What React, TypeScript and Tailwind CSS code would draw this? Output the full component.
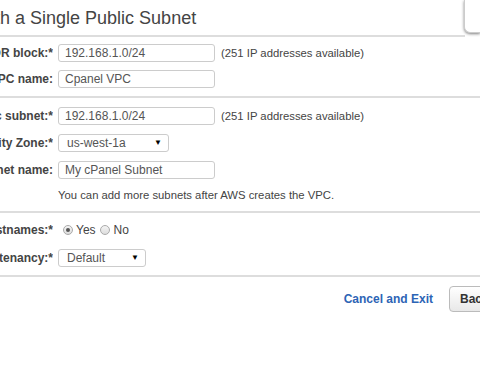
import React from "react";

const font = { fontFamily: '"Liberation Sans", Arial, sans-serif' };

function Label({ children }: { children: React.ReactNode }) {
  return (
    <div className="w-[173px] shrink-0 flex justify-end overflow-hidden whitespace-nowrap text-[12px] font-bold text-[#444]">
      {children}
    </div>
  );
}

function Row({ label, children }: { label: string; children: React.ReactNode }) {
  return (
    <div className="flex items-center h-[18px] gap-[5px]">
      <Label>{label}</Label>
      {children}
    </div>
  );
}

function TextInput({ value, w = "w-[157px]" }: { value: string; w?: string }) {
  return (
    <div className={`${w} h-[18px] border border-[#ccc] rounded-[3px] bg-white flex items-center pl-[6px] text-[12px] text-[#555] whitespace-nowrap`}>
      {value}
    </div>
  );
}

function Select({ value, w }: { value: string; w: string }) {
  return (
    <div className={`${w} h-[18px] border border-[#ccc] rounded-[3px] bg-white flex items-center justify-between pl-[8px] pr-[6px] text-[12px] text-[#555] whitespace-nowrap`}>
      <span>{value}</span>
      <span className="text-[8px] text-black">▼</span>
    </div>
  );
}

function Radio({ checked }: { checked?: boolean }) {
  return (
    <span className="w-[10px] h-[10px] rounded-full border border-[#aaa] bg-gradient-to-b from-[#f4f4f4] to-[#ddd] flex items-center justify-center">
      {checked && <span className="w-[4px] h-[4px] rounded-full bg-[#555]" />}
    </span>
  );
}

export default function App() {
  return (
    <div className="w-[480px] h-[370px] bg-white overflow-hidden relative" style={font}>
      <div className="absolute right-0 top-0 w-[16px] h-[33px] bg-white rounded-bl-[6px] border-l border-b border-[#ccc] shadow-[0_1px_3px_rgba(0,0,0,0.5)]" />
      <div className="ml-[-120px] w-[700px]">
        <div className="h-[35px] pl-[56px] pt-[7px] text-[18px] text-[#444] whitespace-nowrap leading-[22px]">
          VPC with a Single Public Subnet
        </div>
        <div className="w-[585px] h-[2px] bg-[#ddd]" />
        <div className="flex flex-col gap-[8px] pt-[7px] pb-[8px]">
          <Row label="IPv4 CIDR block:*">
            <TextInput value="192.168.1.0/24" />
            <span className="ml-[1px] text-[11.3px] text-[#444]">(251 IP addresses available)</span>
          </Row>
          <Row label="VPC name:">
            <TextInput value="Cpanel VPC" />
          </Row>
        </div>
        <div className="h-[2px] bg-[#ddd]" />
        <div className="flex flex-col gap-[9px] pt-[9px]">
          <Row label="Public subnet:*">
            <TextInput value="192.168.1.0/24" />
            <span className="ml-[1px] text-[11.3px] text-[#444]">(251 IP addresses available)</span>
          </Row>
          <Row label="Availability Zone:*">
            <Select value="us-west-1a" w="w-[111px]" />
          </Row>
          <Row label="Subnet name:">
            <TextInput value="My cPanel Subnet" />
          </Row>
        </div>
        <div className="pl-[178px] pt-[8px] h-[32px] text-[11.3px] text-[#444] leading-[16px]">
          You can add more subnets after AWS creates the VPC.
        </div>
        <div className="h-[2px] bg-[#ddd]" />
        <div className="flex flex-col gap-[10px] pt-[8px] pb-[8px]">
          <Row label="Enable DNS hostnames:*">
            <div className="flex items-center pl-[5px] text-[12px] text-[#444]">
              <Radio checked />
              <span className="ml-[3px]">Yes</span>
              <span className="ml-[4px]"><Radio /></span>
              <span className="ml-[4px]">No</span>
            </div>
          </Row>
          <Row label="Hardware tenancy:*">
            <Select value="Default" w="w-[88px]" />
          </Row>
        </div>
        <div className="h-[2px] bg-[#ddd]" />
      </div>
      <div className="flex items-center justify-end pt-[9px] gap-[16px] mr-[-40px]">
        <span className="text-[12px] font-bold text-[#2d64b5]">Cancel and Exit</span>
        <div className="h-[26px] w-[71px] rounded-[4px] border border-[#bbb] bg-gradient-to-b from-[#fff] to-[#e8e8e8] flex items-center pl-[10px] text-[12px] font-bold text-[#333]">
          Back
        </div>
      </div>
    </div>
  );
}
